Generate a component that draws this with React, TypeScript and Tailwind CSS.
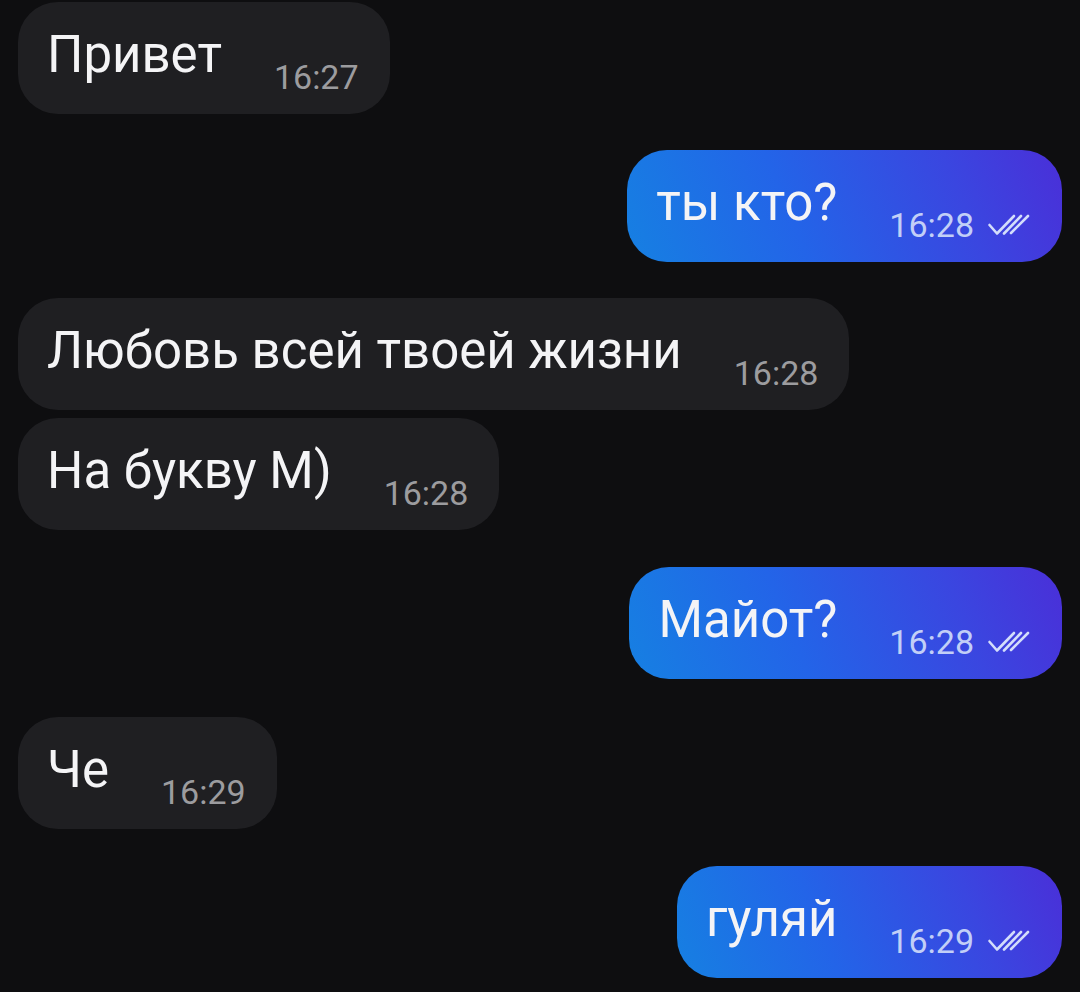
import React from "react";

type Msg = { text: string; time: string; out: boolean; mt: number };

const msgs: Msg[] = [
  { text: "Привет", time: "16:27", out: false, mt: 2 },
  { text: "ты кто?", time: "16:28", out: true, mt: 36 },
  { text: "Любовь всей твоей жизни", time: "16:28", out: false, mt: 36 },
  { text: "На букву М)", time: "16:28", out: false, mt: 8 },
  { text: "Майот?", time: "16:28", out: true, mt: 37 },
  { text: "Че", time: "16:29", out: false, mt: 38 },
  { text: "гуляй", time: "16:29", out: true, mt: 37 },
];

function Checks() {
  const c = "#d3ddfb";
  return (
    <svg width="44" height="24" viewBox="0 0 44 24" fill="none">
      <path d="M2.5 12 L10 20.5 L27 3" stroke={c} strokeWidth="2.6" strokeLinecap="round" strokeLinejoin="round" />
      <path d="M17 20.5 L34 3" stroke={c} strokeWidth="2.6" strokeLinecap="round" />
      <path d="M24 20 L41 3" stroke={c} strokeWidth="2.6" strokeLinecap="round" />
    </svg>
  );
}

function Bubble({ m }: { m: Msg }) {
  const base = "h-[112px] rounded-[40px] flex items-start pl-[29px] pr-[31px]";
  const cls = m.out
    ? base + " bg-[linear-gradient(68deg,#1680e2_0%,#2364e8_38%,#3a46e0_75%,#4a2fd8_100%)]"
    : base + " bg-[#1f1f22]";
  return (
    <div className={cls} style={{ marginTop: m.mt }}>
      <span className="pt-[27px] text-[51px] leading-[51px] text-[#f4f4f6] whitespace-nowrap">
        {m.text}
      </span>
      <span
        className={
          "ml-[52px] pt-[58px] text-[34px] leading-[34px] whitespace-nowrap " +
          (m.out ? "text-[#c2cff7]" : "text-[#9c9c9f]")
        }
      >
        {m.time}
      </span>
      {m.out && (
        <span className="pt-[63px] pl-[13px] flex">
          <Checks />
        </span>
      )}
    </div>
  );
}

export default function App() {
  return (
    <div
      className="w-[1080px] h-[992px] bg-[#0e0e10] overflow-hidden flex flex-col px-[18px]"
      style={{ fontFamily: "Roboto, 'Noto Sans', sans-serif" }}
    >
      {msgs.map((m, i) => (
        <div key={i} className={m.out ? "flex justify-end" : "flex justify-start"}>
          <Bubble m={m} />
        </div>
      ))}
    </div>
  );
}
